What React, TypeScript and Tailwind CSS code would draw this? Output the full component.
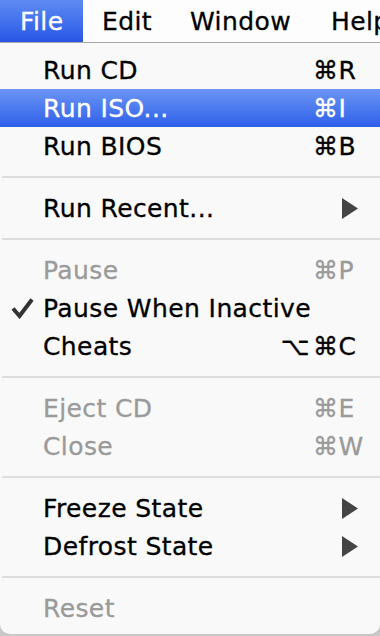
type Item =
  | { kind: "sep" }
  | {
      kind: "item";
      label: string;
      mod?: string;
      key?: string;
      disabled?: boolean;
      active?: boolean;
      checked?: boolean;
      submenu?: boolean;
    };

const items: Item[] = [
  { kind: "item", label: "Run CD", key: "⌘R" },
  { kind: "item", label: "Run ISO...", key: "⌘I", active: true },
  { kind: "item", label: "Run BIOS", key: "⌘B" },
  { kind: "sep" },
  { kind: "item", label: "Run Recent...", submenu: true },
  { kind: "sep" },
  { kind: "item", label: "Pause", key: "⌘P", disabled: true },
  { kind: "item", label: "Pause When Inactive", checked: true },
  { kind: "item", label: "Cheats", mod: "⌥", key: "⌘C" },
  { kind: "sep" },
  { kind: "item", label: "Eject CD", key: "⌘E", disabled: true },
  { kind: "item", label: "Close", key: "⌘W", disabled: true },
  { kind: "sep" },
  { kind: "item", label: "Freeze State", submenu: true },
  { kind: "item", label: "Defrost State", submenu: true },
  { kind: "sep" },
  { kind: "item", label: "Reset", disabled: true },
];

function Check() {
  return (
    <svg width="23" height="22" viewBox="0 0 23 22" className="text-[#333]">
      <path d="M2 11.5 L8.5 19 L21 2.5" fill="none" stroke="currentColor" strokeWidth="4" strokeLinejoin="miter" />
    </svg>
  );
}

function Arrow() {
  return (
    <svg width="16" height="21" viewBox="0 0 16 21" className="text-[#444]">
      <path d="M0 0 L16 10.5 L0 21 Z" fill="currentColor" />
    </svg>
  );
}

function Row({ item }: { item: Extract<Item, { kind: "item" }> }) {
  const color = item.active ? "text-white" : item.disabled ? "text-[#9a9a9a]" : "text-black";
  return (
    <div
      className={
        "flex h-[38px] items-center " +
        color +
        (item.active ? " bg-linear-to-b from-[#6b94f3] to-[#2f5ee9]" : "")
      }
    >
      <div className="flex w-[43px] shrink-0 items-center pl-[11px]">{item.checked ? <Check /> : null}</div>
      <span className="flex-1 whitespace-nowrap">{item.label}</span>
      {item.mod ? <span className="pr-[3px]">{item.mod}</span> : null}
      <div className="flex w-[67px] shrink-0 items-center">
        {item.key ? <span>{item.key}</span> : null}
        {item.submenu ? (
          <span className="pl-[29px]">
            <Arrow />
          </span>
        ) : null}
      </div>
    </div>
  );
}

export default function App() {
  return (
    <div
      className="h-[636px] w-[380px] overflow-hidden bg-[#c8c8c8] text-[25px] tracking-[0.4px] leading-none [-webkit-text-stroke:0.3px_currentColor]"
      style={{ fontFamily: '"DejaVu Sans", "Liberation Sans", sans-serif' }}
    >
      <div className="flex h-[43px] items-stretch border-b border-[#a8a8a8] bg-[#fdfdfd] whitespace-nowrap">
        <div className="flex w-[83px] shrink-0 items-center bg-linear-to-b from-[#5e8bf2] to-[#2a55e6] pl-[20px] text-white">
          File
        </div>
        <div className="flex items-center pl-[19px]">Edit</div>
        <div className="flex items-center pl-[38px]">Window</div>
        <div className="flex items-center pl-[40px]">Help</div>
      </div>
      <div className="h-[591px] rounded-b-[10px] bg-[#f9f9f9] pt-[8px]">
        {items.map((item, i) =>
          item.kind === "sep" ? (
            <div key={i} className="flex h-[24px] items-center pl-[2px]">
              <div className="h-[2px] w-full bg-[#dedede]" />
            </div>
          ) : (
            <Row key={i} item={item} />
          ),
        )}
      </div>
    </div>
  );
}
